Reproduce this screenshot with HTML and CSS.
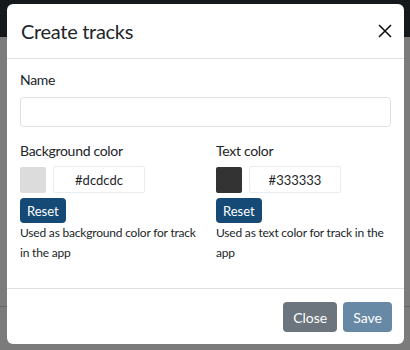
FILE: index.html
```html
<!DOCTYPE html>
<html lang="en">
<head>
  <meta charset="UTF-8" />
  <title>Create tracks</title>
  <link rel="stylesheet" href="styles.css">
</head>
<body>
  <div class="page">
    <div class="navbar"></div>
    <div class="page-body"></div>
  </div>
  <div class="backdrop"></div>

  <div class="modal">
    <div class="modal-header">
      <h5 class="modal-title">Create tracks</h5>
      <button class="btn-close" aria-label="Close">
        <svg width="14" height="14" viewBox="0 0 14 14">
          <path d="M1 1 L13 13 M13 1 L1 13" stroke="#111" stroke-width="1.6" fill="none" />
        </svg>
      </button>
    </div>

    <div class="modal-body">
      <label class="form-label">Name</label>
      <input type="text" class="form-control name-input" />

      <div class="color-row">
        <div class="color-col">
          <label class="form-label">Background color</label>
          <div class="color-pick">
            <span class="swatch swatch-bg"></span>
            <input type="text" class="hex-input" value="#dcdcdc" />
          </div>
          <button class="btn btn-reset">Reset</button>
          <p class="help">Used as background color for track in the app</p>
        </div>
        <div class="color-col">
          <label class="form-label">Text color</label>
          <div class="color-pick">
            <span class="swatch swatch-text"></span>
            <input type="text" class="hex-input" value="#333333" />
          </div>
          <button class="btn btn-reset">Reset</button>
          <p class="help">Used as text color for track in the app</p>
        </div>
      </div>
    </div>

    <div class="modal-footer">
      <button class="btn btn-secondary">Close</button>
      <button class="btn btn-primary" disabled>Save</button>
    </div>
  </div>
</body>
</html>
```

FILE: styles.css
```css
* {
  box-sizing: border-box;
}

body {
  font-family: Lato, "Open Sans", sans-serif;
  margin: 0;
  padding: 0;
  color: #212529;
  width: 410px;
  height: 350px;
  overflow: hidden;
}

.page {
  height: 350px;
  background: #f6f6f6;
}

.navbar {
  height: 37px;
  background: #2b3238;
}

.page-body {
  height: 270px;
  border-bottom: 1px solid #ccc;
}

.backdrop {
  position: absolute;
  inset: 0;
  background: rgba(0, 0, 0, 0.5);
}

.modal {
  position: absolute;
  top: 4px;
  left: 7px;
  width: 397px;
  height: 340px;
  background: #fff;
  border-radius: 6px;
  display: flex;
  flex-direction: column;
}

.modal-header {
  display: flex;
  align-items: center;
  justify-content: space-between;
  padding: 12px 12px 12px 14px;
  border-bottom: 1px solid #dee2e6;
}

.modal-title {
  margin: 0;
  font-size: 20px;
  font-weight: 400;
  line-height: 30px;
  letter-spacing: -0.3px;
}

.btn-close {
  background: none;
  border: none;
  padding: 0;
  width: 14px;
  height: 14px;
  cursor: pointer;
}

.btn-close svg {
  display: block;
}

.modal-body {
  padding: 10px 13px 0 13px;
  flex: 1;
}

.form-label {
  display: block;
  font-size: 14px;
  line-height: 21px;
  margin-bottom: 7px;
  letter-spacing: -0.3px;
}

.form-control {
  display: block;
  width: 100%;
  height: 30px;
  border: 1px solid #dee2e6;
  border-radius: 4px;
  font-size: 14px;
}

.name-input {
  margin-bottom: 13px;
}

.color-row {
  display: grid;
  grid-template-columns: 196px 175px;
}

.color-col .form-label {
  margin-bottom: 5px;
}

.color-pick {
  display: flex;
  gap: 7px;
  align-items: center;
  margin-bottom: 5px;
}

.swatch {
  width: 26px;
  height: 26px;
  border-radius: 2px;
}

.swatch-bg {
  background: #dcdcdc;
}

.swatch-text {
  background: #333333;
}

.hex-input {
  width: 92px;
  height: 27px;
  border: 1px solid #e9ecef;
  border-radius: 2px;
  text-align: center;
  font-family: inherit;
  font-size: 13px;
  color: #212529;
}

.btn {
  font-family: inherit;
  border: none;
  border-radius: 4px;
  color: #fff;
  cursor: pointer;
}

.btn-reset {
  display: block;
  background: #154a76;
  font-size: 13px;
  height: 25px;
  padding: 0 7px;
}

.help {
  margin: 0;
  max-width: 180px;
  font-size: 12px;
  line-height: 20px;
  letter-spacing: -0.2px;
}

.modal-footer {
  display: flex;
  justify-content: flex-end;
  gap: 6px;
  padding: 13px 12px 12px;
  border-top: 1px solid #dee2e6;
}

.modal-footer .btn {
  height: 30px;
  font-size: 14px;
  padding: 0 10px;
}

.btn-secondary {
  background: #6c757d;
}

.btn-primary {
  background: #6889a6;
}
```
